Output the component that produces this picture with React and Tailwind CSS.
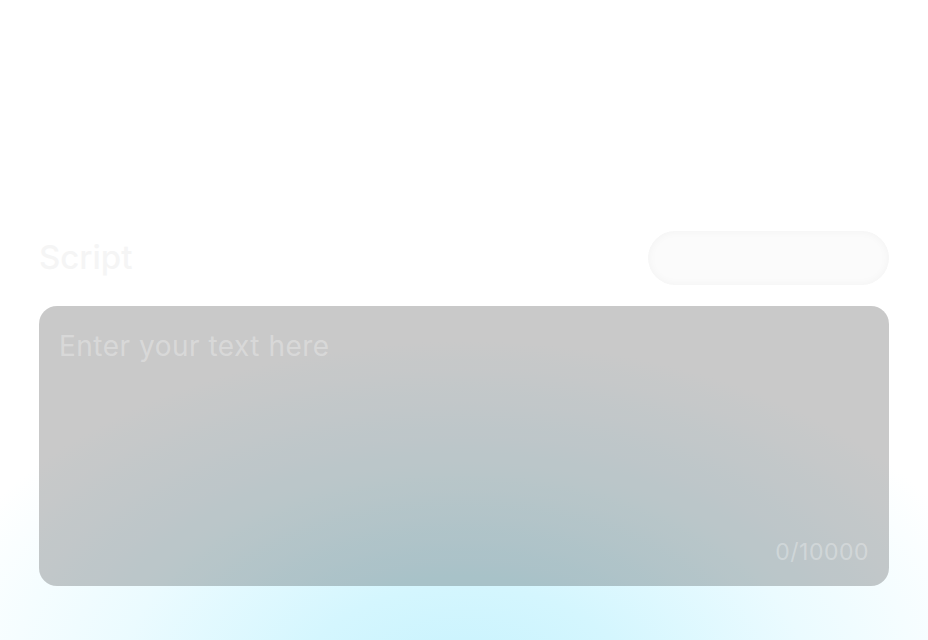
export default function App() {
  return (
    <div
      className="relative h-[640px] w-[928px] overflow-hidden bg-white bg-[radial-gradient(ellipse_560px_350px_at_50%_108%,#c6f2fd_0%,#d4f6fe_30%,#ebfbff_62%,#ffffff_100%)]"
      style={{ fontFamily: "Inter, 'Open Sans', sans-serif" }}
    >
      <div className="flex flex-col px-[39px] pt-[231px]">
        <div className="flex h-[54px] items-center justify-between">
          <h1 className="text-[33px] font-medium text-[#f5f5f5]">Script</h1>
          <button className="h-[54px] w-[241px] rounded-full bg-[#fbfbfb] shadow-[inset_0_0_10px_rgba(0,0,0,0.04)]" />
        </div>
        <div className="relative mt-[21px] h-[280px] rounded-[18px] bg-black/[0.21] px-5 pt-[26px]">
          <div className="text-[28px] leading-none tracking-[0.5px] text-white/30">Enter your text here</div>
          <div className="absolute bottom-[22px] right-[20px] text-[23px] leading-none tracking-[0.5px] text-white/30">0/10000</div>
        </div>
      </div>
    </div>
  );
}
